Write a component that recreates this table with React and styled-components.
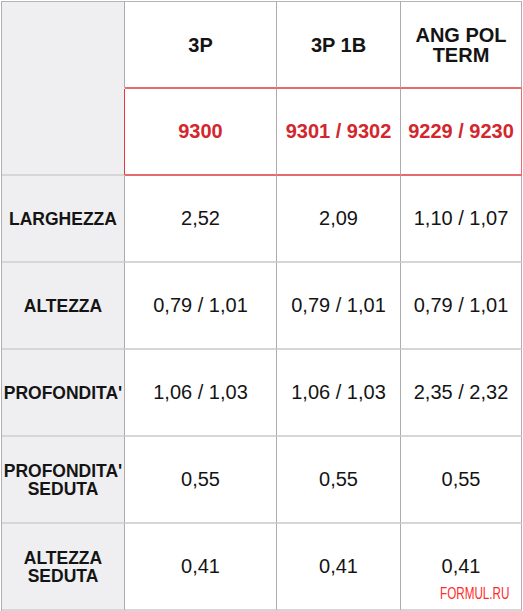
import styled, { createGlobalStyle } from "styled-components";

const GlobalStyle = createGlobalStyle`
  html, body {
    margin: 0;
    padding: 0;
    background: #ffffff;
  }
  body {
    font-family: "Liberation Sans", Arial, sans-serif;
  }
`;

const Pagina = styled.div`
  padding: 1px 0 0 1px;
  width: 523px;
  height: 611px;
  box-sizing: border-box;
  overflow: hidden;
`;

const Tabella = styled.div`
  display: grid;
  grid-template-columns: 123px 152px 124px 121px;
  grid-auto-rows: 87px;
  border-top: 1px solid #b4b4b4;
  border-left: 1px solid #b0b0b0;
  width: max-content;
`;

const Cella = styled.div`
  position: relative;
  box-sizing: border-box;
  display: flex;
  align-items: center;
  justify-content: center;
  text-align: center;
  background: ${(p) => (p.$etichetta ? "#efeff1" : "#ffffff")};
  border-right: 1px solid ${(p) => p.$bordoDestro || "#acacac"};
  border-bottom: 2px solid ${(p) => p.$bordoSotto || "#d6d6d6"};
  color: #141414;
  white-space: nowrap;
`;

const Intestazione = styled.span`
  font-size: 20px;
  font-weight: 700;
  line-height: 20px;
`;

const Codice = styled.span`
  font-size: 20px;
  font-weight: 700;
  color: #d3262d;
`;

const Etichetta = styled.span`
  font-size: 17.5px;
  font-weight: 700;
  line-height: 18px;
  margin: 0 -2px;
`;

const Valore = styled.span`
  font-size: 20px;
  font-weight: 400;
`;

const Filigrana = styled.span`
  position: absolute;
  left: 39px;
  top: 62px;
  font-size: 16px;
  line-height: 1;
  color: #ff2a2a;
  transform: scaleX(0.73);
  transform-origin: left top;
`;

const ROSSO_V = "#e0383d";
const ROSSO_H = "#e66a6e";

const modelli = [
  { nome: ["3P"], codice: "9300" },
  { nome: ["3P 1B"], codice: "9301 / 9302" },
  { nome: ["ANG POL", "TERM"], codice: "9229 / 9230" },
];

const righe = [
  { etichetta: ["LARGHEZZA"], valori: ["2,52", "2,09", "1,10 / 1,07"] },
  { etichetta: ["ALTEZZA"], valori: ["0,79 / 1,01", "0,79 / 1,01", "0,79 / 1,01"] },
  { etichetta: ["PROFONDITA'"], valori: ["1,06 / 1,03", "1,06 / 1,03", "2,35 / 2,32"] },
  { etichetta: ["PROFONDITA'", "SEDUTA"], valori: ["0,55", "0,55", "0,55"] },
  { etichetta: ["ALTEZZA", "SEDUTA"], valori: ["0,41", "0,41", "0,41"] },
];

const Righe = ({ testo }) =>
  testo.map((t, i) => (
    <span key={i}>
      {i > 0 && <br />}
      {t}
    </span>
  ));

const App = () => {
  return (
    <Pagina>
      <GlobalStyle />
      <Tabella>
        <Cella $etichetta $bordoSotto="#efeff1" />
        {modelli.map((m, i) => (
          <Cella key={"n" + i} $bordoSotto={ROSSO_H}>
            <Intestazione>
              <Righe testo={m.nome} />
            </Intestazione>
          </Cella>
        ))}

        <Cella $etichetta $bordoDestro={ROSSO_V} />
        {modelli.map((m, i) => (
          <Cella
            key={"c" + i}
            $bordoSotto={ROSSO_H}
            $bordoDestro={i === modelli.length - 1 ? ROSSO_H : undefined}
          >
            <Codice>{m.codice}</Codice>
          </Cella>
        ))}

        {righe.map((r, ri) => [
          <Cella key={"e" + ri} $etichetta>
            <Etichetta>
              <Righe testo={r.etichetta} />
            </Etichetta>
          </Cella>,
          ...r.valori.map((v, vi) => (
            <Cella key={"v" + ri + vi}>
              <Valore>{v}</Valore>
              {ri === righe.length - 1 && vi === r.valori.length - 1 && (
                <Filigrana>FORMUL.RU</Filigrana>
              )}
            </Cella>
          )),
        ])}
      </Tabella>
    </Pagina>
  );
};

export default App;
